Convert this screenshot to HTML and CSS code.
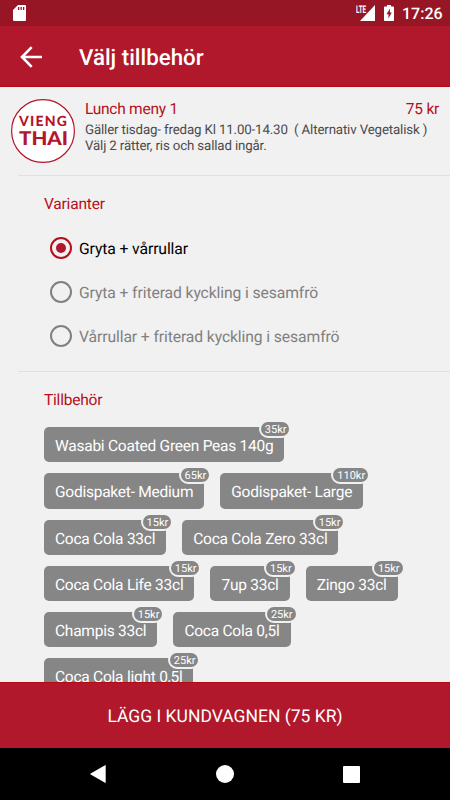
FILE: index.html
```html
<!DOCTYPE html>
<html lang="sv">
<head>
    <meta charset="UTF-8">
    <meta name="viewport" content="width=device-width, initial-scale=1.0">
    <title>Välj tillbehör</title>
    <link rel="stylesheet" href="styles.css">
</head>
<body>
    <div class="screen">
        <div class="status-bar">
            <svg class="sd-icon" width="13" height="16" viewBox="0 0 13 16">
                <path fill="#fff" d="M5 0h7a1 1 0 0 1 1 1v14a1 1 0 0 1-1 1H1a1 1 0 0 1-1-1V5z"/>
                <path fill="#971625" d="M5 2h1.3v3H5zM7.5 2h1.3v3H7.5zM10 2h1.3v3H10z"/>
            </svg>
            <div class="status-right">
                <div class="signal">
                    <span class="lte">LTE</span>
                    <svg width="15" height="16" viewBox="0 0 15 16"><path fill="#fff" d="M15 0v16H0z"/></svg>
                </div>
                <svg class="battery" width="10" height="16" viewBox="0 0 10 16">
                    <path fill="#fff" d="M3 0h4v1.6h2.2a.8.8 0 0 1 .8.8v12.8a.8.8 0 0 1-.8.8H.8a.8.8 0 0 1-.8-.8V2.4a.8.8 0 0 1 .8-.8H3z"/>
                    <path fill="#971625" d="M6 3.5 2.5 9.3h2v4.2l3.3-6H5.9z"/>
                </svg>
                <span class="clock">17:26</span>
            </div>
        </div>

        <header class="app-bar">
            <svg class="back" width="22" height="22" viewBox="0 0 22 22">
                <path fill="none" stroke="#fff" stroke-width="2.6" d="M11.7 1.2 2 11l9.7 9.8M2 11h20"/>
            </svg>
            <h1>Välj tillbehör</h1>
        </header>

        <main class="content">
            <div class="item">
                <svg class="logo" width="64" height="64" viewBox="0 0 64 64">
                    <circle cx="32" cy="32" r="31.4" fill="#fff" stroke="#b4152a" stroke-width="1.2"/>
                    <text class="logo-top" x="8" y="26.5" textLength="48">VIENG</text>
                    <text class="logo-bottom" x="8" y="45.5" textLength="49" lengthAdjust="spacingAndGlyphs">THAI</text>
                </svg>
                <div class="item-info">
                    <div class="item-head">
                        <span>Lunch meny 1</span>
                        <span>75 kr</span>
                    </div>
                    <p class="item-text">Gäller tisdag- fredag Kl 11.00-14.30&nbsp; ( Alternativ Vegetalisk )<br>Välj 2 rätter, ris och sallad ingår.</p>
                </div>
            </div>

            <div class="section variants">
                <h2>Varianter</h2>
                <div class="option selected"><span class="radio"></span><span class="label">Gryta + vårrullar</span></div>
                <div class="option"><span class="radio"></span><span class="label">Gryta + friterad kyckling i sesamfrö</span></div>
                <div class="option"><span class="radio"></span><span class="label">Vårrullar + friterad kyckling i sesamfrö</span></div>
            </div>

            <div class="section extras">
                <h2>Tillbehör</h2>
                <div class="chips">
                    <div class="chip">Wasabi Coated Green Peas 140g<span class="price">35kr</span></div>
                    <div class="chip">Godispaket- Medium<span class="price">65kr</span></div>
                    <div class="chip">Godispaket- Large<span class="price">110kr</span></div>
                    <div class="chip">Coca Cola 33cl<span class="price">15kr</span></div>
                    <div class="chip">Coca Cola Zero 33cl<span class="price">15kr</span></div>
                    <div class="chip">Coca Cola Life 33cl<span class="price">15kr</span></div>
                    <div class="chip">7up 33cl<span class="price">15kr</span></div>
                    <div class="chip">Zingo 33cl<span class="price">15kr</span></div>
                    <div class="chip">Champis 33cl<span class="price">15kr</span></div>
                    <div class="chip">Coca Cola 0,5l<span class="price">25kr</span></div>
                    <div class="chip">Coca Cola light 0,5l<span class="price">25kr</span></div>
                </div>
            </div>
        </main>

        <button class="add-button">LÄGG I KUNDVAGNEN (75 KR)</button>

        <nav class="nav-bar">
            <svg width="16" height="18" viewBox="0 0 16 18"><path fill="#fff" d="M15 .2a.5.5 0 0 1 .7.4v16.8a.5.5 0 0 1-.7.4L.7 9.5a.6.6 0 0 1 0-1z"/></svg>
            <svg width="18" height="18" viewBox="0 0 18 18"><circle cx="9" cy="9" r="9" fill="#fff"/></svg>
            <svg width="17" height="17" viewBox="0 0 17 17"><rect width="17" height="17" rx="1" fill="#fff"/></svg>
        </nav>
    </div>
</body>
</html>
```
FILE: styles.css
```css
* {
    box-sizing: border-box;
}
body {
    margin: 0;
    font-family: Roboto, sans-serif;
    background-color: #f1f1f1;
    text-rendering: geometricPrecision;
}
.screen {
    width: 450px;
    height: 800px;
    display: flex;
    flex-direction: column;
    overflow: hidden;
}
.status-bar {
    height: 26px;
    flex: none;
    display: flex;
    justify-content: space-between;
    padding: 5px 8px 0 13px;
    background-color: #971625;
    color: #fff;
}
.status-right {
    display: flex;
}
.signal {
    display: flex;
    height: 16px;
}
.lte {
    font-size: 10.5px;
    font-weight: 700;
    line-height: 9px;
    width: 11px;
    margin-right: -7px;
    transform: scaleX(0.6);
    transform-origin: left;
}
.battery {
    margin-left: 9px;
}
.clock {
    width: 40px;
    margin-left: 8px;
    font-size: 16px;
    font-weight: 500;
    line-height: 18px;
}
.app-bar {
    height: 61px;
    flex: none;
    display: flex;
    align-items: center;
    padding-left: 20px;
    background-color: #b1182b;
    border-bottom: 1px solid #b50812;
    color: #fff;
}
.back {
    margin-top: 1px;
}
.app-bar h1 {
    margin: 3px 0 0 37px;
    font-size: 22.3px;
    font-weight: 500;
    line-height: 28px;
}
.content {
    flex: 1;
    min-height: 0;
    overflow: hidden;
    color: #b50f1b;
}
.item {
    height: 88px;
    display: flex;
    padding: 12px 11px 0;
}
.logo {
    flex: none;
}
.logo text {
    font-family: Lato, sans-serif;
    font-weight: 900;
    fill: #b4152a;
}
.logo-top {
    font-size: 14px;
}
.logo-bottom {
    font-size: 19px;
}
.item-info {
    flex: 1;
    margin-left: 10px;
}
.item-head {
    display: flex;
    justify-content: space-between;
    font-size: 15.5px;
    line-height: 21px;
    letter-spacing: -0.25px;
}
.item-text {
    margin: 3px 0 0;
    color: #4b4b4b;
    font-size: 13.3px;
    line-height: 15.5px;
    letter-spacing: -0.15px;
    white-space: nowrap;
}
.section {
    margin-left: 18px;
    padding-left: 26px;
    border-top: 1px solid #e0e0e0;
}
.section h2 {
    margin: 0;
    font-size: 15.5px;
    font-weight: 400;
    line-height: 18px;
    letter-spacing: -0.2px;
}
.variants {
    height: 196px;
    padding-top: 19px;
}
.variants h2 {
    margin-bottom: 13px;
}
.option {
    height: 44px;
    display: flex;
    align-items: center;
    padding-left: 6px;
    color: #808080;
    font-size: 15.7px;
    letter-spacing: -0.1px;
}
.radio {
    width: 22px;
    height: 22px;
    margin-right: 7px;
    border: 2px solid #808080;
    border-radius: 50%;
}
.selected {
    color: #000;
}
.selected .radio {
    padding: 4px;
    border-color: #b50f1b;
    background: #b1182b content-box;
}
.extras {
    padding-top: 19px;
}
.chips {
    display: flex;
    flex-wrap: wrap;
    gap: 11px 16px;
    margin-top: 18.2px;
    padding-right: 30px;
}
.chip {
    position: relative;
    height: 35.2px;
    padding: 0 11px;
    border-radius: 5px;
    background-color: #868686;
    color: #fff;
    font-size: 15.5px;
    line-height: 38px;
    letter-spacing: -0.24px;
    white-space: nowrap;
}
.price {
    position: absolute;
    top: -7px;
    right: -7px;
    height: 18px;
    padding: 0 3px 0 4px;
    border: 2px solid #f1f1f1;
    border-radius: 9px;
    background-color: #868686;
    font-size: 11px;
    line-height: 15px;
    letter-spacing: 0;
}
.add-button {
    height: 66px;
    flex: none;
    padding: 2px 0 0;
    border: 0;
    border-top: 1px solid #b50812;
    background-color: #b1182b;
    color: #fff;
    font-family: inherit;
    font-size: 17.5px;
    text-rendering: inherit;
}
.nav-bar {
    height: 52px;
    flex: none;
    display: flex;
    justify-content: space-between;
    align-items: center;
    padding: 0 90px;
    background-color: #000;
}
```
